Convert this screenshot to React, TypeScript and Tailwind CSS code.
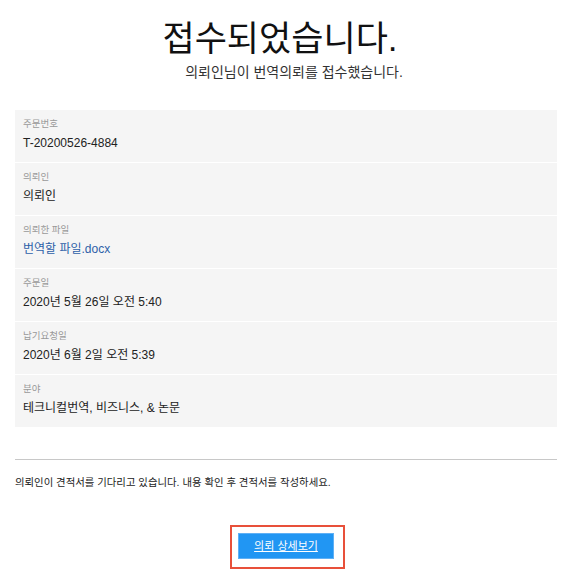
import React from "react";

const rows: { label: string; value: string; link?: boolean }[] = [
  { label: "주문번호", value: "T-20200526-4884" },
  { label: "의뢰인", value: "의뢰인" },
  { label: "의뢰한 파일", value: "번역할 파일.docx", link: true },
  { label: "주문일", value: "2020년 5월 26일 오전 5:40" },
  { label: "납기요청일", value: "2020년 6월 2일 오전 5:39" },
  { label: "분야", value: "테크니컬번역, 비즈니스, & 논문" },
];

export default function App() {
  return (
    <div
      className="w-[568px] h-[572px] bg-white px-[15px] text-[#222]"
      style={{ fontFamily: '"Liberation Sans", "Noto Sans CJK KR", sans-serif' }}
    >
      <h1 className="pt-[18px] pr-[8px] text-center text-[35px] leading-[42px] font-normal text-[#111]">
        접수되었습니다.
      </h1>
      <p className="mt-[4px] pl-[20px] text-center text-[14px] leading-[17px] text-[#333]">
        의뢰인님이 번역의뢰를 접수했습니다.
      </p>
      <div className="mt-[29px] flex flex-col gap-[1px] w-[542px]">
        {rows.map((r) => (
          <div key={r.label} className="h-[52px] bg-[#f5f5f5] pl-[8px] pt-[7px]">
            <div className="text-[9.5px] leading-[14px] text-[#999]">{r.label}</div>
            <div
              className={
                "mt-[4px] text-[12px] leading-[16px] " +
                (r.link ? "text-[#2d5fa8]" : "text-[#222]")
              }
            >
              {r.value}
            </div>
          </div>
        ))}
      </div>
      <div className="mt-[32px] h-px w-[542px] bg-[#c8c8c8]" />
      <p className="mt-[16px] text-[10.4px] leading-[14px] text-[#222]">
        의뢰인이 견적서를 기다리고 있습니다. 내용 확인 후 견적서를 작성하세요.
      </p>
      <div className="mt-[35px] flex justify-center">
        <div className="ml-[7px] border-2 border-[#e8503a] pl-[6px] pr-[9px] pt-[6px] pb-[8px]">
          <button className="block w-[96px] h-[26px] bg-[#2196f3] border border-[#5fb0f5] text-white text-[11px] leading-[24px] underline">
            의뢰 상세보기
          </button>
        </div>
      </div>
    </div>
  );
}
